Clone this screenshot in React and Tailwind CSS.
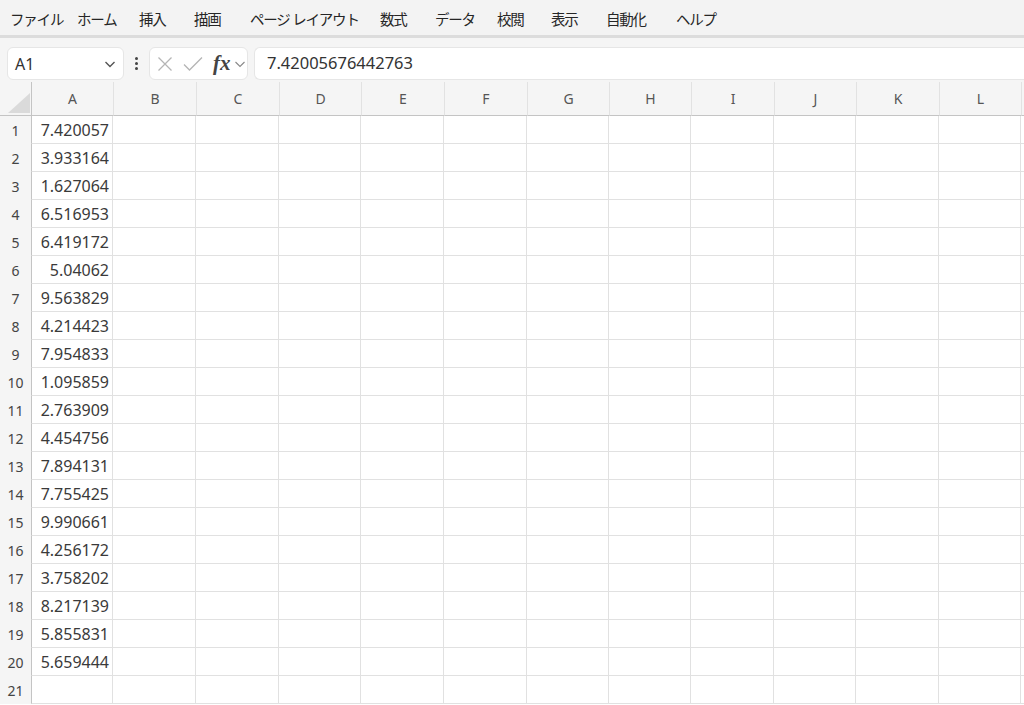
import React from 'react';

// ширины пунктов меню подобраны по позициям на скриншоте
const MENU = [
  ['ファイル', 67], ['ホーム', 62], ['挿入', 55], ['描画', 56], ['ページ レイアウト', 130],
  ['数式', 55], ['データ', 62], ['校閲', 54], ['表示', 55], ['自動化', 70], ['ヘルプ', 80],
];
const COLS = ['A', 'B', 'C', 'D', 'E', 'F', 'G', 'H', 'I', 'J', 'K', 'L', ''];
const VALUES = [
  '7.420057', '3.933164', '1.627064', '6.516953', '6.419172', '5.04062', '9.563829',
  '4.214423', '7.954833', '1.095859', '2.763909', '4.454756', '7.894131', '7.755425',
  '9.990661', '4.256172', '3.758202', '8.217139', '5.855831', '5.659444', '',
];

const FONT = { fontFamily: '"Noto Sans", "Noto Sans CJK JP", sans-serif' };

// ─── Формула-бар ────────────────────────────────────────────────
function FormulaBar() {
  return (
    <div className="h-[44px] bg-[#f5f5f5] flex items-start pt-[9px] pl-[7px]">
      <div className="w-[117px] h-[33px] bg-white rounded-[6px] border border-[#e6e6e6] flex items-center justify-between pl-[7px] pr-[6px]">
        <span className="text-[16px] text-[#333]">A1</span>
        <svg width="14" height="14" viewBox="0 0 14 14" fill="none" stroke="#555" strokeWidth="1.4">
          <path d="M2.5 5l4.5 4.5L11.5 5" />
        </svg>
      </div>
      <div className="w-[25px] h-[33px] flex flex-col items-center justify-center gap-[2px]">
        <span className="w-[3px] h-[3px] rounded-full bg-[#444]" />
        <span className="w-[3px] h-[3px] rounded-full bg-[#444]" />
        <span className="w-[3px] h-[3px] rounded-full bg-[#444]" />
      </div>
      <div className="w-[99px] h-[33px] bg-white rounded-[6px] border border-[#e6e6e6] flex items-center pl-[7px]">
        <svg width="16" height="16" viewBox="0 0 16 16" fill="none" stroke="#b5b5b5" strokeWidth="1.3">
          <path d="M1.5 1.5l13 13M14.5 1.5l-13 13" />
        </svg>
        <svg width="20" height="16" viewBox="0 0 20 16" fill="none" stroke="#b5b5b5" strokeWidth="1.3" className="ml-[10px]">
          <path d="M1 8.5l5.5 5.5L19 1.5" />
        </svg>
        <span className="ml-[10px] text-[21px] italic font-bold text-[#444] leading-none" style={{ fontFamily: '"Liberation Serif", serif' }}>fx</span>
        <svg width="12" height="12" viewBox="0 0 12 12" fill="none" stroke="#888" strokeWidth="1.1" className="ml-[3px]">
          <path d="M1.5 4l4.5 4.5L10.5 4" />
        </svg>
      </div>
      <div className="ml-[6px] flex-1 h-[33px] bg-white rounded-l-[6px] border border-r-0 border-[#e6e6e6] flex items-center pl-[12px]">
        <span className="text-[16.5px] text-[#333]">7.42005676442763</span>
      </div>
    </div>
  );
}

export default function App() {
  return (
    <div className="w-[1024px] h-[705px] overflow-hidden bg-white" style={FONT}>
      {/* Меню */}
      <div className="h-[38px] bg-[#f3f3f3] flex items-center pt-[3px] pl-[10px] border-b-[3px] border-[#dcdcdc]">
        {MENU.map(([m, w]) => (
          <span
            key={m}
            style={{ width: w }}
            className="shrink-0 text-[14.5px] text-[#262626] leading-none whitespace-nowrap tracking-[-1.2px]"
          >
            {m}
          </span>
        ))}
      </div>

      <FormulaBar />

      {/* Сетка */}
      <div className="grid grid-cols-[31px_82px_83px_83px_82px_83px_83px_82px_82px_83px_82px_83px_82px_3px] bg-[#f5f5f5]">
        {/* угол */}
        <div className="h-[34px] border-b border-[#c4c4c4] flex items-end justify-end pr-[1px] pb-[2px]">
          <div className="w-0 h-0 border-l-[22px] border-l-transparent border-b-[20px] border-b-[#dadada]" />
        </div>
        {COLS.map((c, i) => (
          <div
            key={i}
            className={`h-[34px] border-b border-[#c4c4c4] flex items-center justify-center text-[14px] text-[#555] ${i === 0 ? 'border-l border-l-[#c4c4c4]' : 'border-l border-l-[#e2e2e2]'}`}
          >
            {c}
          </div>
        ))}

        {VALUES.map((v, r) => (
          <React.Fragment key={r}>
            <div className="h-[28px] flex items-center justify-center text-[14px] text-[#444] bg-[#f5f5f5]">
              {r + 1}
            </div>
            {COLS.map((c, i) => (
              <div
                key={i}
                className={`h-[28px] bg-white border-b border-r border-[#e1e1e1] flex items-center justify-end pr-[3px] text-[16px] text-[#3a3a3a] ${i === 0 ? 'border-l border-l-[#c4c4c4]' : ''}`}
              >
                {i === 0 ? v : ''}
              </div>
            ))}
          </React.Fragment>
        ))}
      </div>
    </div>
  );
}
